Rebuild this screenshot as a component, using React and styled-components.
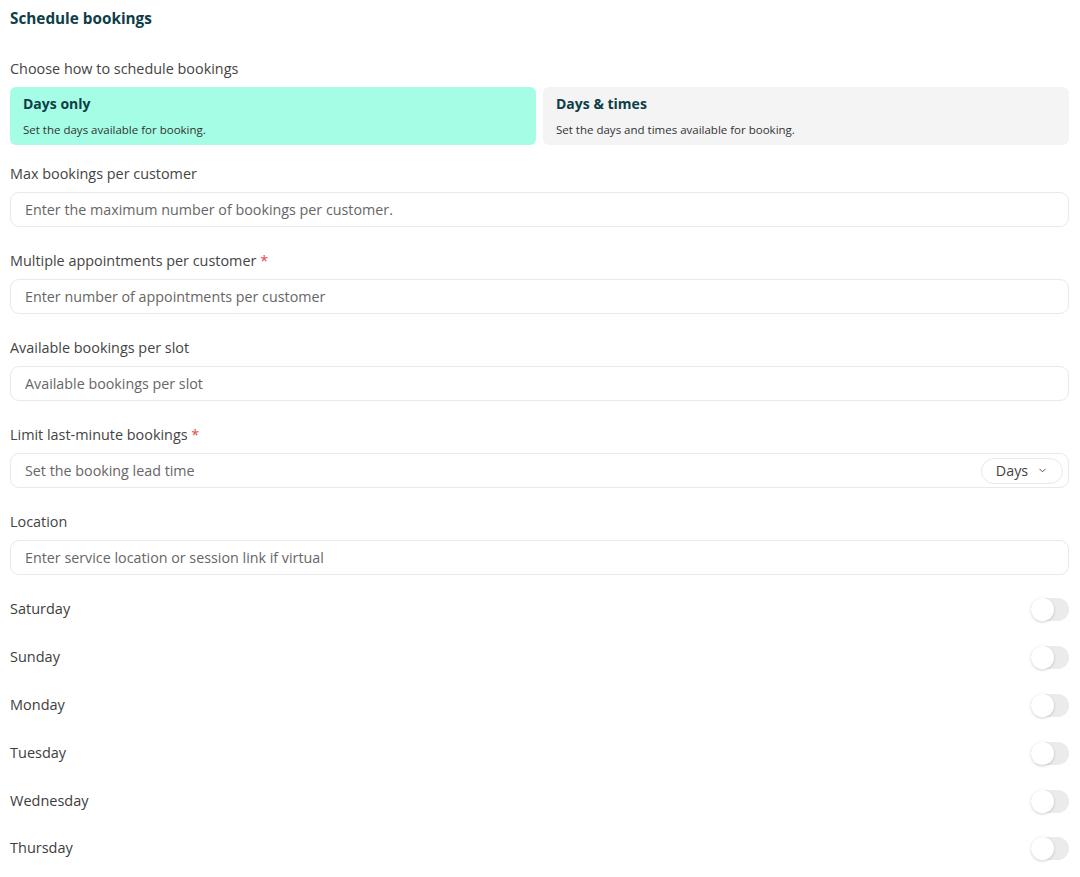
import React, { useState } from "react";
import styled, { createGlobalStyle } from "styled-components";

const GlobalStyle = createGlobalStyle`
  body {
    margin: 0;
    background: #ffffff;
    font-family: "Open Sans", "Noto Sans", sans-serif;
    color: #3d3d3d;
  }
`;

const days = ["Saturday", "Sunday", "Monday", "Tuesday", "Wednesday", "Thursday"];

const fields = [
  { label: "Max bookings per customer", placeholder: "Enter the maximum number of bookings per customer." },
  { label: "Multiple appointments per customer", placeholder: "Enter number of appointments per customer", required: true },
  { label: "Available bookings per slot", placeholder: "Available bookings per slot" },
  { label: "Limit last-minute bookings", placeholder: "Set the booking lead time", required: true, unit: "Days" },
  { label: "Location", placeholder: "Enter service location or session link if virtual" },
];

const App = () => {
  const [mode, setMode] = useState("days");
  const [open, setOpen] = useState({});

  return (
    <>
      <GlobalStyle />
      <Page>
        <Title>Schedule bookings</Title>
        <Label>Choose how to schedule bookings</Label>
        <Options>
          <Option selected={mode === "days"} onClick={() => setMode("days")}>
            <OptionTitle>Days only</OptionTitle>
            <OptionText>Set the days available for booking.</OptionText>
          </Option>
          <Option selected={mode === "times"} onClick={() => setMode("times")}>
            <OptionTitle>Days &amp; times</OptionTitle>
            <OptionText>Set the days and times available for booking.</OptionText>
          </Option>
        </Options>

        {fields.map((f, i) => (
          <Field key={f.label} last={i === fields.length - 1}>
            <Label>
              {f.label}
              {f.required && <Star> *</Star>}
            </Label>
            <InputBox>
              <Input placeholder={f.placeholder} />
              {f.unit && (
                <UnitButton>
                  {f.unit}
                  <svg width="11" height="11" viewBox="0 0 24 24" fill="none" stroke="currentColor" strokeWidth="2" strokeLinecap="round" strokeLinejoin="round">
                    <path d="M6 9l6 6 6-6" />
                  </svg>
                </UnitButton>
              )}
            </InputBox>
          </Field>
        ))}

        <DayList>
          {days.map((d) => (
            <DayRow key={d}>
              <DayName>{d}</DayName>
              <Toggle on={!!open[d]} onClick={() => setOpen({ ...open, [d]: !open[d] })}>
                <Knob on={!!open[d]} />
              </Toggle>
            </DayRow>
          ))}
        </DayList>
      </Page>
    </>
  );
};

export default App;

const Page = styled.div`
  padding: 9px 11px 20px 10px;
  display: flex;
  flex-direction: column;
`;

const Title = styled.h1`
  margin: 0 0 32px;
  font-size: 15.3px;
  font-weight: 700;
  color: #0e3e48;
  line-height: 19px;
`;

const Label = styled.div`
  font-size: 14.4px;
  line-height: 18px;
  color: #444;
  margin-bottom: 9px;
`;

const Star = styled.span`
  color: #e5484d;
`;

const Options = styled.div`
  display: grid;
  grid-template-columns: 1fr 1fr;
  gap: 7px;
  margin-bottom: 20px;
`;

const Option = styled.div`
  height: 58px;
  box-sizing: border-box;
  padding: 8px 13px;
  border-radius: 6px;
  background: ${({ selected }) => (selected ? "#a4fde4" : "#f4f4f4")};
  cursor: pointer;
  display: flex;
  flex-direction: column;
  gap: 8.5px;
`;

const OptionTitle = styled.div`
  font-size: 14px;
  font-weight: 700;
  line-height: 18px;
  color: #0e3e48;
`;

const OptionText = styled.div`
  font-size: 11.5px;
  line-height: 15px;
  color: #333;
`;

const Field = styled.div`
  display: flex;
  flex-direction: column;
  margin-bottom: ${({ last }) => (last ? "10px" : "25px")};
`;

const InputBox = styled.div`
  height: 35px;
  box-sizing: border-box;
  border: 1px solid #e9e9e9;
  border-radius: 9px;
  display: flex;
  align-items: center;
  padding: 0 5px 0 14px;
`;

const Input = styled.input`
  flex: 1;
  border: none;
  outline: none;
  background: transparent;
  font-family: inherit;
  font-size: 14.3px;
  color: #333;
  padding: 0;
  &::placeholder {
    color: #666;
  }
`;

const UnitButton = styled.button`
  height: 26px;
  width: 82px;
  box-sizing: border-box;
  border: 1px solid #e9e9e9;
  border-radius: 13px;
  background: #fff;
  font-family: inherit;
  font-size: 14.3px;
  color: #444;
  display: flex;
  align-items: center;
  justify-content: center;
  gap: 9px;
  cursor: pointer;
`;

const DayList = styled.div`
  display: flex;
  flex-direction: column;
`;

const DayRow = styled.div`
  height: 47.8px;
  display: flex;
  align-items: center;
  justify-content: space-between;
`;

const DayName = styled.div`
  font-size: 14.5px;
  color: #3d3d3d;
`;

const Toggle = styled.div`
  width: 38px;
  height: 23px;
  margin-top: 2px;
  border-radius: 12px;
  background: ${({ on }) => (on ? "#2dd4a8" : "#ebebeb")};
  position: relative;
  cursor: pointer;
`;

const Knob = styled.div`
  position: absolute;
  top: 0;
  left: ${({ on }) => (on ? "15px" : "0")};
  width: 23px;
  height: 23px;
  border-radius: 50%;
  background: #fff;
  box-shadow: 0 1px 3px rgba(0, 0, 0, 0.18);
  transition: left 0.2s;
`;
